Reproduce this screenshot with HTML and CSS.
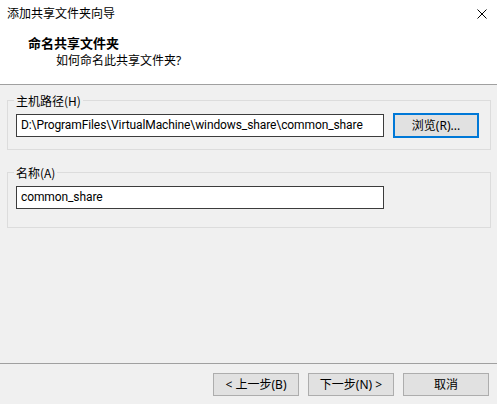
FILE: index.html
```html
<!DOCTYPE html>
<html lang="zh-CN">
<head>
<meta charset="utf-8">
<title>添加共享文件夹向导</title>
<link rel="stylesheet" href="styles.css">
</head>
<body>
<div class="window">
  <header class="header">
    <div class="titlebar">
      <span class="title">添加共享文件夹向导</span>
      <svg class="close" width="10" height="10" viewBox="0 0 10 10"><path d="M0.5 0.5 L9.5 9.5 M9.5 0.5 L0.5 9.5" stroke="#000" stroke-width="1" fill="none"/></svg>
    </div>
    <div class="heading">命名共享文件夹</div>
    <div class="sub">如何命名此共享文件夹?</div>
  </header>
  <main class="content">
    <fieldset class="group">
      <legend>主机路径(H)</legend>
      <div class="row">
        <div class="textbox">D:\ProgramFiles\VirtualMachine\windows_share\common_share</div>
        <button class="btn default">浏览(R)...</button>
      </div>
    </fieldset>
    <fieldset class="group second">
      <legend>名称(A)</legend>
      <div class="row">
        <div class="textbox">common_share</div>
      </div>
    </fieldset>
  </main>
  <footer class="footer">
    <button class="btn">&lt; 上一步(B)</button>
    <button class="btn">下一步(N) &gt;</button>
    <button class="btn">取消</button>
  </footer>
</div>
</body>
</html>
```

FILE: styles.css
```css
html, body {
  margin: 0;
  padding: 0;
}
body {
  width: 497px;
  height: 404px;
  overflow: hidden;
  background: #f0f0f0;
  font-family: "Noto Sans", "Noto Sans CJK SC", sans-serif;
  font-size: 12px;
  color: #000;
}
.window {
  display: flex;
  flex-direction: column;
  height: 404px;
}
.header {
  background: #fff;
  height: 84px;
  border-bottom: 1px solid #a0a0a0;
  flex: none;
}
.titlebar {
  display: flex;
  justify-content: space-between;
  align-items: center;
  padding: 5px 10px 0 7px;
  height: 17px;
  line-height: 17px;
}
.close {
  display: block;
}
.heading {
  margin-top: 13px;
  padding-left: 28px;
  font-weight: bold;
  font-size: 13px;
  line-height: 17px;
}
.sub {
  padding-left: 56px;
  line-height: 17px;
}
.content {
  flex: none;
  padding: 7px 6px 0 7px;
}
.group {
  margin: 0;
  border: 1px solid #dcdcdc;
  padding: 4px 8px 11px 8px;
  min-width: 0;
}
.group legend {
  padding: 0 2px;
  margin-left: -2px;
  line-height: 17px;
  font-family: "Noto Sans CJK SC", sans-serif;
}
.group.second {
  margin-top: 14px;
  padding-top: 5px;
  padding-bottom: 18px;
}
.row {
  display: flex;
  align-items: center;
  gap: 9px;
}
.textbox {
  box-sizing: border-box;
  height: 23px;
  width: 368px;
  background: #fff;
  border: 1px solid #3c3c3c;
  padding: 0 4px;
  line-height: 21px;
  white-space: nowrap;
  overflow: hidden;
  font-family: Roboto, "Noto Sans", sans-serif;
  font-size: 12px;
  letter-spacing: -0.1px;
}
.btn {
  box-sizing: border-box;
  width: 86px;
  height: 23px;
  margin: 0;
  padding: 0;
  background: #e1e1e1;
  border: 1px solid #adadad;
  font-family: "Noto Sans", "Noto Sans CJK SC", sans-serif;
  font-size: 12px;
  color: #000;
  line-height: 17px;
}
.btn.default {
  height: 25px;
  border: 2px solid #0078d7;
}
.footer {
  margin-top: auto;
  flex: none;
  border-top: 1px solid #a0a0a0;
  display: flex;
  justify-content: flex-end;
  gap: 9px;
  padding: 9px 8px 8px 0;
  height: 23px;
}
```
